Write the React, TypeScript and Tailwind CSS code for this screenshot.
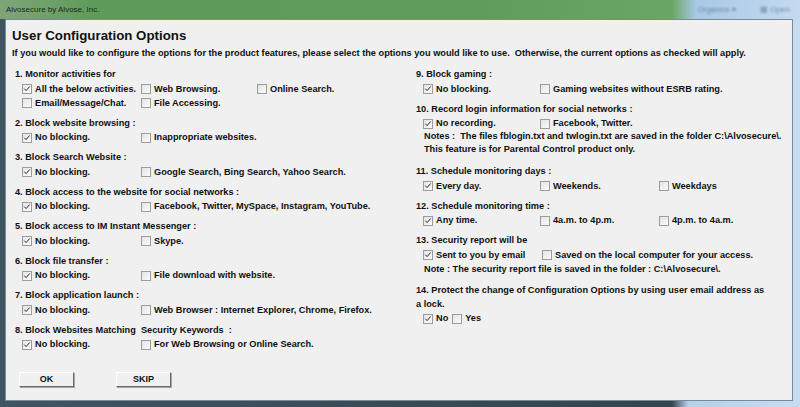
import React from "react";

type Opt = { text: string; checked?: boolean };
type Item = { label: string; rows: Opt[][]; cols: string };

const leftItems: Item[] = [
  {
    label: "1. Monitor activities for",
    cols: "grid-cols-[119px_116px_auto]",
    rows: [
      [
        { text: "All the below activities.", checked: true },
        { text: "Web Browsing." },
        { text: "Online Search." },
      ],
      [{ text: "Email/Message/Chat." }, { text: "File Accessing." }],
    ],
  },
  {
    label: "2. Block website browsing :",
    cols: "grid-cols-[119px_auto]",
    rows: [[{ text: "No blocking.", checked: true }, { text: "Inappropriate websites." }]],
  },
  {
    label: "3. Block Search Website :",
    cols: "grid-cols-[119px_auto]",
    rows: [[{ text: "No blocking.", checked: true }, { text: "Google Search, Bing Search, Yahoo Search." }]],
  },
  {
    label: "4. Block access to the website for social networks :",
    cols: "grid-cols-[119px_auto]",
    rows: [
      [
        { text: "No blocking.", checked: true },
        { text: "Facebook, Twitter, MySpace, Instagram, YouTube." },
      ],
    ],
  },
  {
    label: "5. Block access to IM Instant Messenger :",
    cols: "grid-cols-[119px_auto]",
    rows: [[{ text: "No blocking.", checked: true }, { text: "Skype." }]],
  },
  {
    label: "6. Block file transfer :",
    cols: "grid-cols-[119px_auto]",
    rows: [[{ text: "No blocking.", checked: true }, { text: "File download with website." }]],
  },
  {
    label: "7. Block application launch :",
    cols: "grid-cols-[119px_auto]",
    rows: [
      [
        { text: "No blocking.", checked: true },
        { text: "Web Browser : Internet Explorer, Chrome, Firefox." },
      ],
    ],
  },
  {
    label: "8. Block Websites Matching  Security Keywords  :",
    cols: "grid-cols-[119px_auto]",
    rows: [[{ text: "No blocking.", checked: true }, { text: "For Web Browsing or Online Search." }]],
  },
];

function Box({ checked }: { checked?: boolean }) {
  return (
    <span className="inline-flex h-[10px] w-[10px] shrink-0 items-center justify-center border border-[#9c9c9c] bg-gradient-to-br from-[#e4e4e4] to-[#fbfbfb]">
      {checked && (
        <svg viewBox="0 0 10 10" className="h-[8px] w-[8px]">
          <path d="M1.6 4.6 L3.9 7 L8.4 1.8" fill="none" stroke="#2a2a2a" strokeWidth="1.25" />
        </svg>
      )}
    </span>
  );
}

function Check({ text, checked }: Opt) {
  return (
    <div className="flex items-center gap-[3px] whitespace-nowrap">
      <Box checked={checked} />
      <span>{text}</span>
    </div>
  );
}

function Row({ opts, cols, className = "" }: { opts: Opt[]; cols: string; className?: string }) {
  return (
    <div className={`grid ${cols} h-[14px] items-center ml-[7px] ${className}`}>
      {opts.map((o) => (
        <Check key={o.text} {...o} />
      ))}
    </div>
  );
}

function Label({ children }: { children: React.ReactNode }) {
  return <div className="flex h-[14px] items-center whitespace-pre">{children}</div>;
}

function Btn({ children }: { children: React.ReactNode }) {
  return (
    <button className="h-[15px] w-[55px] border border-t-white border-l-white border-r-[#6b6b6b] border-b-[#6b6b6b] bg-[#f0f0f0] text-[9px] font-bold leading-none shadow-[1px_1px_0_#a6a6a6]">
      {children}
    </button>
  );
}

export default function App() {
  return (
    <div className="flex h-[407px] w-[800px] flex-col overflow-hidden bg-[linear-gradient(to_right,#3f5560_0%,#34454f_84%,#b6d0ea_86%,#c7dcf0_100%)] text-[#111] [font-family:'Liberation_Sans',Arial,sans-serif]">
      {/* title bar */}
      <div className="flex h-[19px] shrink-0 items-center bg-[linear-gradient(to_right,#7ea57a_0%,#5f9b59_12%,#609d5a_60%,#6aa765_84%,#a9c8e6_87%,#c4daef_100%)] pl-[6px]">
        <span className="text-[8px] text-[#1c2a1c]">Alvosecure by Alvose, Inc.</span>
        <div className="ml-auto mr-[10px] flex items-center gap-[24px] text-[8px] text-[#4a6a8a] opacity-70 blur-[0.8px]">
          <span>Organize ▾</span>
          <span>▦ Open</span>
        </div>
      </div>

      {/* window body */}
      <div className="flex flex-1 pl-[5px] pr-[7px] pb-[6px]">
        <div className="flex flex-1 flex-col border border-[#7c8a96] bg-[#f0f0f0] px-[6px] text-[9.2px] font-bold">
          <div className="mt-[7px] flex h-[18px] items-center text-[13.3px]">User Configuration Options</div>
          <div className="mt-[2px] flex h-[14px] items-center whitespace-pre">
            If you would like to configure the options for the product features, please select the options you would like to use.  Otherwise, the current options as checked will apply.
          </div>

          <div className="mt-[7px] flex">
            {/* left column */}
            <div className="flex w-[404px] flex-col pl-[3px]">
              <div className="flex flex-col gap-[6px]">
                {leftItems.map((it) => (
                  <div key={it.label} className="flex flex-col">
                    <Label>{it.label}</Label>
                    {it.rows.map((r, i) => (
                      <Row key={i} opts={r} cols={it.cols} className={i === 0 ? "mt-[0.5px]" : ""} />
                    ))}
                  </div>
                ))}
              </div>
              <div className="ml-[4px] mt-[20px] flex gap-[42px]">
                <Btn>OK</Btn>
                <Btn>SKIP</Btn>
              </div>
            </div>

            {/* right column */}
            <div className="flex flex-1 flex-col">
              <Label>9. Block gaming :</Label>
              <Row
                cols="grid-cols-[117px_auto]"
                className="mt-[0.5px]"
                opts={[{ text: "No blocking.", checked: true }, { text: "Gaming websites without ESRB rating." }]}
              />

              <div className="mt-[6.5px]">
                <Label>10. Record login information for social networks :</Label>
              </div>
              <Row
                cols="grid-cols-[117px_auto]"
                className="!h-[13px]"
                opts={[{ text: "No recording.", checked: true }, { text: "Facebook, Twitter." }]}
              />
              <div className="ml-[8px] flex flex-col">
                <div className="flex h-[13.5px] items-center whitespace-pre">
                  Notes :  The files fblogin.txt and twlogin.txt are saved in the folder C:\Alvosecure\.
                </div>
                <div className="flex h-[13.5px] items-center">This feature is for Parental Control product only.</div>
              </div>

              <div className="mt-[8px]">
                <Label>11. Schedule monitoring days :</Label>
              </div>
              <Row
                cols="grid-cols-[117px_119px_auto]"
                className="mt-[0.5px]"
                opts={[{ text: "Every day.", checked: true }, { text: "Weekends." }, { text: "Weekdays" }]}
              />

              <div className="mt-[6px]">
                <Label>12. Schedule monitoring time :</Label>
              </div>
              <Row
                cols="grid-cols-[117px_119px_auto]"
                className="mt-[0.5px]"
                opts={[{ text: "Any time.", checked: true }, { text: "4a.m. to 4p.m." }, { text: "4p.m. to 4a.m." }]}
              />

              <div className="mt-[6px]">
                <Label>13. Security report will be</Label>
              </div>
              <Row
                cols="grid-cols-[119px_auto]"
                className="mt-[0.5px]"
                opts={[
                  { text: "Sent to you by email", checked: true },
                  { text: "Saved on the local computer for your access." },
                ]}
              />
              <div className="ml-[8px] flex h-[14px] items-center">
                Note : The security report file is saved in the folder : C:\Alvosecure\.
              </div>

              <div className="mt-[7px] flex flex-col">
                <Label>14. Protect the change of Configuration Options by using user email address as</Label>
                <Label>a lock.</Label>
              </div>
              <div className="ml-[7px] mt-[0.5px] flex h-[14px] items-center gap-[4px]">
                <Check text="No" checked />
                <Check text="Yes" />
              </div>
            </div>
          </div>
        </div>
      </div>
    </div>
  );
}
